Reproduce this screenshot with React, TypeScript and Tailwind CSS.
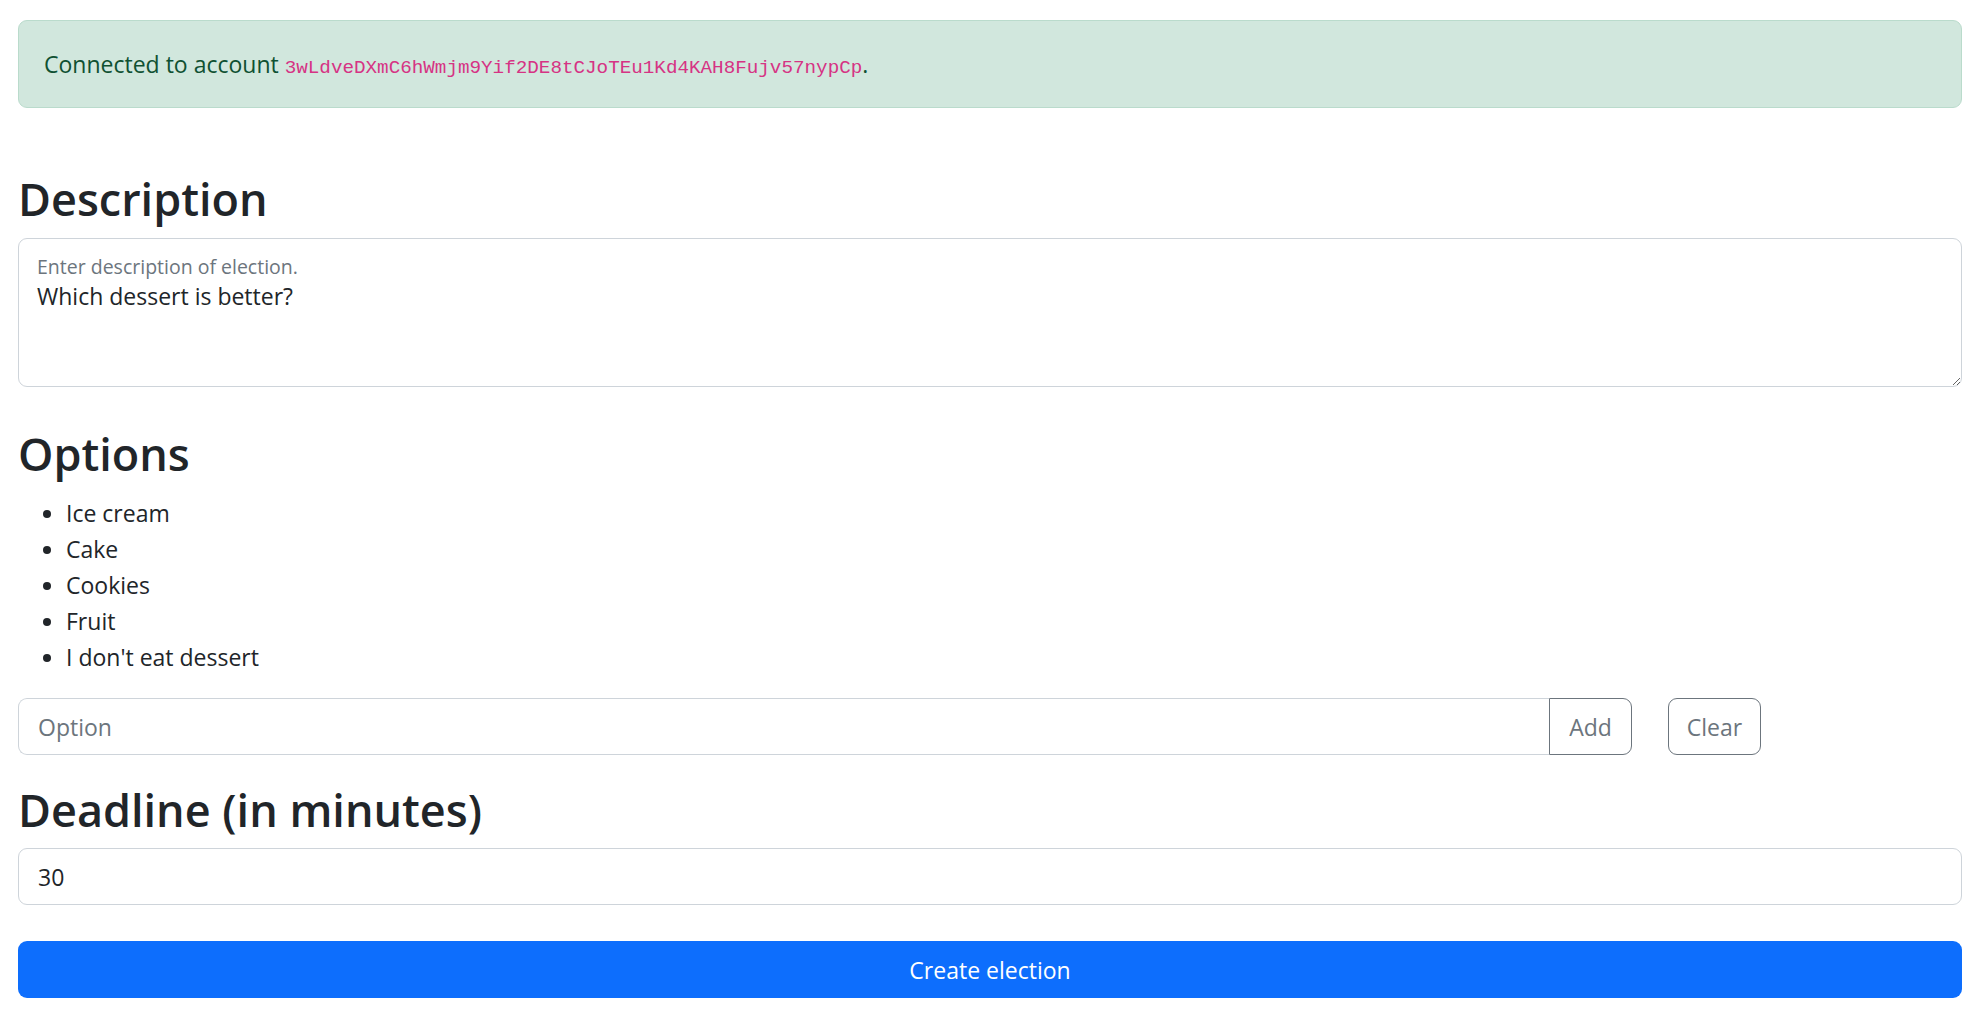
import React from "react";

export default function App() {
  return (
    <div
      className="min-h-[1017px] bg-white pl-[18px] pr-[14px] pt-[20px] text-[23px] leading-[36px] text-[#212529] font-['Open_Sans',_'Noto_Sans',_sans-serif]"
    >
      <div className="flex h-[88px] items-center rounded-[9px] border border-[#badbcc] bg-[#d1e7dd] px-[25px] pt-[4px] text-[#0f5132]">
        <span>
          Connected to account{" "}
          <code className="font-['Liberation_Mono',_monospace] text-[19.25px] text-[#d63384]">
            3wLdveDXmC6hWmjm9Yif2DE8tCJoTEu1Kd4KAH8Fujv57nypCp
          </code>
          .
        </span>
      </div>

      <h2 className="mt-[62px] text-[45px] font-semibold leading-[58px]">Description</h2>

      <div className="relative mt-[10px]">
        <label className="pointer-events-none absolute left-[19px] top-[14px] text-[19.5px] leading-[30px] text-[#6c757d]">
          Enter description of election.
        </label>
        <textarea
          className="block h-[149px] w-full resize-y rounded-[9px] border border-[#ced4da] bg-white px-[18px] pt-[39px] pb-[15px] text-[23px] leading-[36px] text-[#212529] outline-none"
          defaultValue="Which dessert is better?"
        />
      </div>

      <h2 className="mt-[38px] text-[45px] font-semibold leading-[58px]">Options</h2>

      <ul className="mt-[12px] list-disc pl-[48px]">
        <li>Ice cream</li>
        <li>Cake</li>
        <li>Cookies</li>
        <li>Fruit</li>
        <li>I don't eat dessert</li>
      </ul>

      <div className="mt-[23px] flex items-stretch">
        <div className="flex w-[1614px]">
          <input
            className="h-[57px] min-w-0 flex-1 rounded-l-[9px] border border-r-0 border-[#ced4da] px-[19px] text-[23px] text-[#212529] outline-none placeholder:text-[#6c757d]"
            placeholder="Option"
          />
          <button className="h-[57px] w-[83px] rounded-r-[9px] border border-[#6c757d] text-[23px] text-[#6c757d]">
            Add
          </button>
        </div>
        <button className="ml-[36px] h-[57px] w-[93px] rounded-[9px] border border-[#6c757d] text-[23px] text-[#6c757d]">
          Clear
        </button>
      </div>

      <h2 className="mt-[26px] text-[45px] font-semibold leading-[58px]">Deadline (in minutes)</h2>

      <input
        className="mt-[9px] block h-[57px] w-full rounded-[9px] border border-[#ced4da] px-[19px] text-[23px] text-[#212529] outline-none"
        defaultValue="30"
      />

      <button className="mt-[36px] block h-[57px] w-full rounded-[9px] bg-[#0d6efd] text-[23px] text-white">
        Create election
      </button>
    </div>
  );
}
